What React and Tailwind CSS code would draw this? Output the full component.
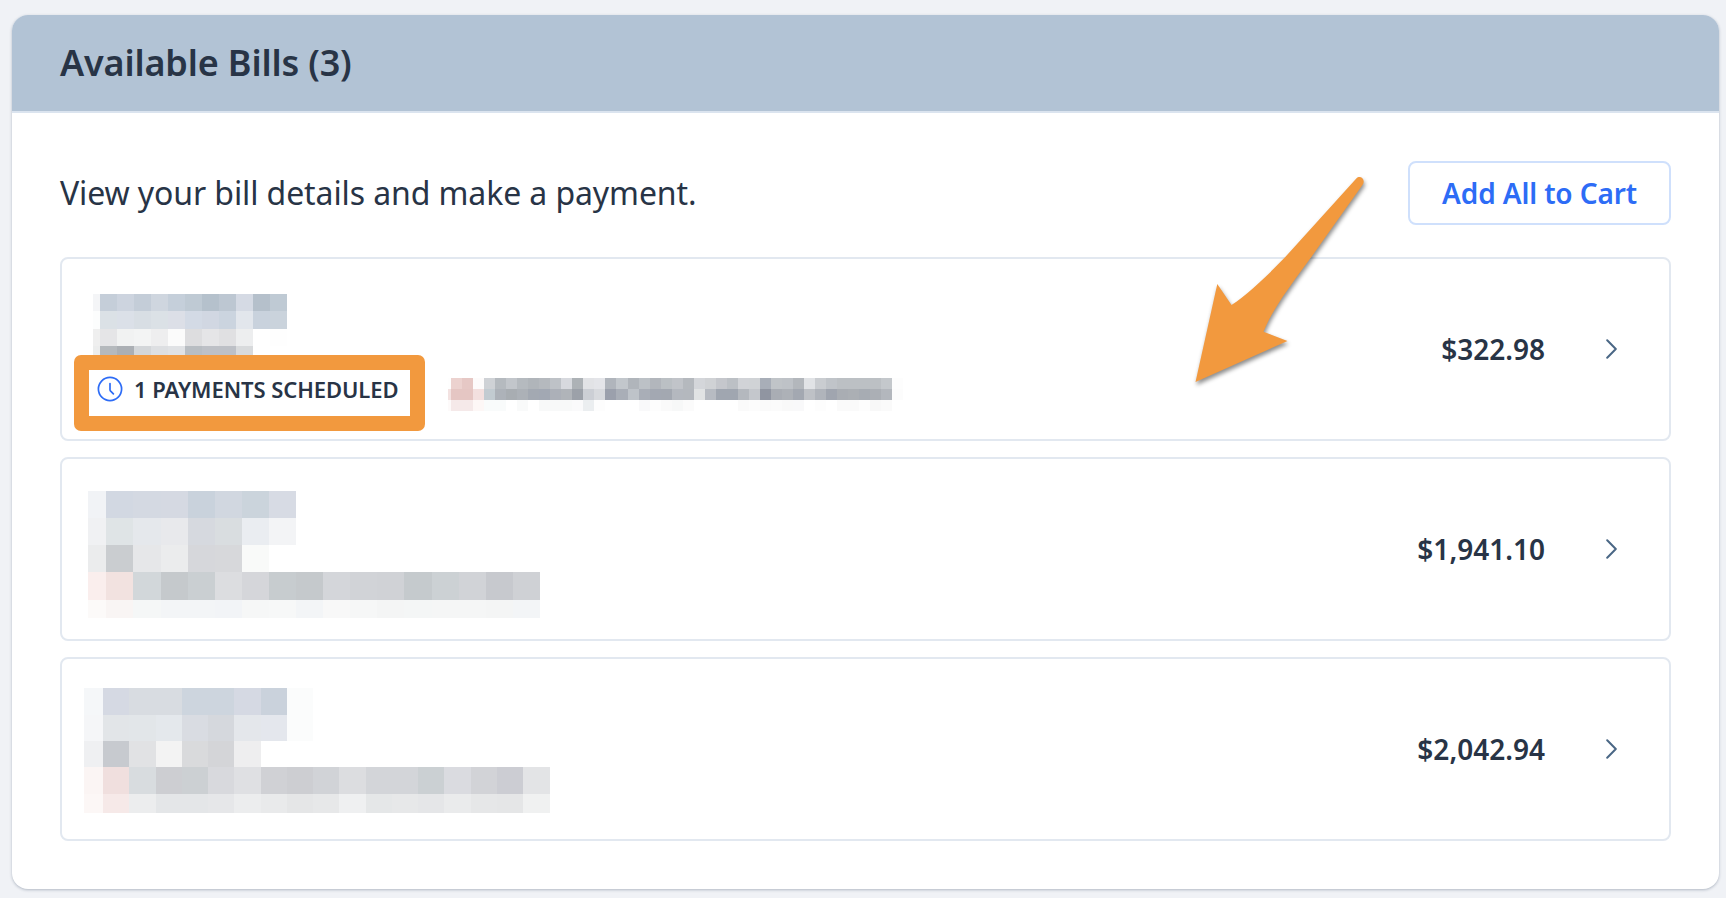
const words = (s) => s.trim().split(/\s+/);

const NAME_1 = {
  first: 7,
  cell: 17,
  heights: [17.3, 17.7, 17, 12],
  rows: [
    words('f4f5f7 c5ced9 cdd4df c4cdd8 cfd6df c5cfda bfcad4 b5c1cc bdc7d2 d5dae4 b5c0cb bfcad4'),
    words('fcfdfd dbe1e6 dbe0e8 d8dee4 dbe1e6 dcdfe7 d3dae5 d1d7e2 cbd4df e2e6ec c9d2dd cad3dc'),
    words('efefef e5e5e7 f1f2f2 f3f4f4 eeeeef fbfbfb dddddf e5e5e7 e0e0e2 edeeef ffffff fefefe'),
    words('eceded b5b9bd abafb4 d3d6d9 dddfe2 e0e2e5 b8bdc2 bdc0c6 bdc0c6 d8dadc'),
  ],
};

const STATUS_1 = {
  first: 3,
  cell: 11.04,
  heights: [11, 11, 11],
  rows: [
    words('fefefe ecd2cf e6c8c5 fdfbfb cfd2d6 b5babf c2c6cb b5babf b0b5ba b5b9be bec2c7 d7d9de adb2b6 e2e3e6 e4e5e9 b0b5bc c2c7cc b0b5bb bcc1c6 b2b6bc bbc0c4 c1c4c9 b5b9be d4d6da d0d2d5 c5c7cc bcc0c5 d1d3d7 d0d3d6 a8aeb8 c0c4c8 bec2c7 b3b7bc e1e3e6 cacdd1 c0c4c9 bcc0c4 bcc0c4 bcc0c4 bcc0c4 c4c8cc fdfdfd'),
    words('f3e2e1 e5c6c3 e5c6c3 f3e0df c2cbd1 adb2b9 a8adb2 acb1b7 a3a9b2 a2a8b3 acb0b8 b0b4b9 9ca1a9 cccfd5 d8dade 9ba0ac a9aeb7 bec3c9 a9aeb7 a3a8b2 a3a8b1 b4b8bf b4b8be e1e3e4 b7bbc2 a0a6b0 a0a6b0 b4b8be c4c7cc 9095a1 a9adb4 adb1b7 a3a8b1 bec1c6 b0b4bb a0a5af a9adb3 abafb4 a7acb3 abafb5 b3b7bd fcfcfc'),
    words('fdfafa f5e9e9 f5e9e9 fdf7f6 f9fbfb f9fbfb ffffff f9fafa ffffff f8f9f9 f8f9f9 f8f9f9 fafafb ebeef0 fdfdfd ffffff ffffff ffffff f9f9fa fdfdfd fafafa f7f8f8 fbfbfb ffffff ffffff ffffff ffffff fafafa fcfcfc fafafa fbfbfb f9f9f9 f9f9fa ffffff fdfdfd ffffff fafafa fafafa fdfdfd f8f8f8 fafafa'),
  ],
};

const DETAILS_2 = {
  first: 18.4,
  cell: 27.1,
  heights: [27, 27, 27.3, 27.4, 18],
  rows: [
    words('f1f3f6 d2d8e2 d4d9e2 d5d9e2 c9d2dc d1d7e0 cbd4dc d7dbe4'),
    words('f0f1f3 dfe4e6 e5e8ec e8e9ec d6d9df d9dde0 eaedf1 f3f4f6'),
    words('ebeced cacdd0 e6e7e9 ebeced d6d7db d7d8db f9faf9'),
    words('faeeed f2e2e0 d2d7da c5c9cc cacfd2 dcdde0 d5d6da c7cccf c5c9cc d4d6da d1d3d7 d0d2d6 c5cacd ccd1d4 d1d3d7 c7c9ce cfd1d5'),
    words('fcfaf9 f9f5f4 f5f7f7 f3f5f7 f3f5f7 f2f4f7 f6f7f7 f7f8f8 f3f5f7 f8f8f8 f6f7f7 f4f5f5 f4f6f6 f5f6f6 f5f6f6 f4f5f5 f3f5f7'),
  ],
};

const DETAILS_3 = {
  first: 19,
  cell: 26.27,
  heights: [26.5, 26.3, 26.4, 26.6, 19],
  rows: [
    words('f5f7f9 d5d9e3 d8dce1 d8dce1 cdd5de cdd5de d5d9e3 cad2dc fbfcfc'),
    words('f5f6f8 e2e5e8 e2e6e9 e4e8ec d9dce2 d5d8dd e4e7eb e4e7ed fbfcfc'),
    words('eff0f2 c7cacf e1e2e4 f3f3f3 d9dadc d4d5d8 eeeeef'),
    words('fbf5f4 f0dfde d8dcdf cdced2 ccd0d3 d8d9dd dfe0e3 d0d1d5 cdced2 d1d3d7 dcdde0 d3d5d9 d3d5d9 cbd0d3 dadbe0 d2d3d7 cccdd3 e3e4e6'),
    words('fcf7f6 f6e9e8 ecedee e4e6e8 e4e6e8 e6e7e9 ecedee e9eaeb e5e6e7 e7e8e9 eff0f1 e5e7e8 e7e8e9 e5e6e8 eaebec e6e7e8 e5e6e7 f0f1f1'),
  ],
};

function Mosaic({ data, className = '' }) {
  return (
    <div className={`flex shrink-0 flex-col ${className}`} aria-hidden="true">
      {data.rows.map((row, r) => (
        <div key={r} className="flex" style={{ height: data.heights[r] }}>
          {row.map((color, c) => (
            <div
              key={c}
              className="shrink-0"
              style={{ width: c === 0 ? data.first : data.cell, backgroundColor: `#${color}` }}
            />
          ))}
        </div>
      ))}
    </div>
  );
}

function ClockIcon() {
  return (
    <svg width="26" height="26" viewBox="0 0 26 26" fill="none" stroke="#2d6cf6" strokeWidth="1.7" strokeLinecap="round" strokeLinejoin="round" className="shrink-0">
      <circle cx="13" cy="13" r="11.6" />
      <path d="M13 7.6v6.2q0 .6.4 1.1l3 3" />
    </svg>
  );
}

function Chevron() {
  return (
    <svg width="12" height="20" viewBox="0 0 12 20" fill="none" stroke="#4a6785" strokeWidth="2" strokeLinecap="round" strokeLinejoin="round" className="shrink-0">
      <path d="M1.2 1.3 9.8 10 1.2 18.7" />
    </svg>
  );
}

function BillRow({ amount, children }) {
  return (
    <li className="flex h-[184px] justify-between rounded-lg border-2 border-[#e2e8f0] pr-[51px]">
      <div className="flex flex-col">{children}</div>
      <div className="flex items-center gap-[61px]">
        <span className="text-[28px] leading-9 font-semibold">{amount}</span>
        <Chevron />
      </div>
    </li>
  );
}

function Arrow() {
  return (
    <svg
      width="190"
      height="230"
      viewBox="1185 165 190 230"
      className="pointer-events-none absolute top-[165px] left-[1185px] drop-shadow-[1px_3px_2px_rgba(0,0,0,0.45)]"
    >
      <path
        fill="#f2993e"
        d="M1195.5 382 1217.3 284 1231.5 305C1246 296 1266 277 1285.5 256.7L1356.3 178.4C1360 174.6 1366 179 1362.8 184.6L1311.5 256.7C1290 286 1272 310 1263.5 331.7L1287.5 341Z"
      />
    </svg>
  );
}

export default function App() {
  return (
    <main className="relative h-[898px] w-[1726px] overflow-hidden bg-[#f0f2f6] pt-[15px] pl-3 font-['Noto_Sans',sans-serif] text-[#283446]">
      <section className="h-[874px] w-[1707px] overflow-hidden rounded-2xl bg-white shadow-[0_1px_3px_rgba(30,50,80,0.3)]">
        <header className="flex h-[98px] items-center border-b-2 border-[#dbe4ef] bg-[#b2c3d5] pl-12">
          <h1 className="text-[36px] leading-[48px] font-semibold tracking-[-0.17px]">Available Bills (3)</h1>
        </header>
        <div className="px-12 pt-12">
          <div className="flex h-16 items-center justify-between">
            <p className="text-[32px] leading-10 tracking-[-0.1px]">View your bill details and make a payment.</p>
            <button className="h-16 w-[263px] rounded-lg border-2 border-[#cfe0fc] text-[28px] leading-9 font-semibold tracking-[-0.13px] text-[#2d6cf6]">
              Add All to Cart
            </button>
          </div>
          <ul className="mt-8 flex flex-col gap-4">
            <BillRow amount="$322.98">
              <Mosaic data={NAME_1} className="mt-[35px] ml-[31px]" />
              <div className="mt-[18px] ml-[35px] flex h-[26px] items-center">
                <ClockIcon />
                <span className="ml-[11px] w-[314px] text-[22px] leading-[26px] font-semibold tracking-[-0.07px] whitespace-nowrap">
                  1 PAYMENTS SCHEDULED
                </span>
                <Mosaic data={STATUS_1} className="mt-[11px]" />
              </div>
            </BillRow>
            <BillRow amount="$1,941.10">
              <Mosaic data={DETAILS_2} className="mt-8 ml-[26px]" />
            </BillRow>
            <BillRow amount="$2,042.94">
              <Mosaic data={DETAILS_3} className="mt-[29px] ml-[22px]" />
            </BillRow>
          </ul>
        </div>
      </section>
      <div className="pointer-events-none absolute top-[355px] left-[74px] h-[76px] w-[351px] rounded-[7px] bg-[#f2993e] [clip-path:polygon(evenodd,0_0,351px_0,351px_76px,0_76px,0_0,15px_15px,336px_15px,336px_61px,15px_61px,15px_15px)]" />
      <Arrow />
    </main>
  );
}
